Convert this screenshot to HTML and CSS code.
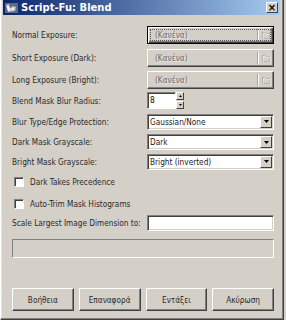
FILE: index.html
```html
<!DOCTYPE html>
<html>
<head>
<meta charset="utf-8">
<link rel="stylesheet" href="styles.css">
</head>
<body>
<div class="window">
  <div class="titlebar">
    <svg class="appicon" width="13" height="11" viewBox="0 0 13 11">
      <rect x="0" y="1" width="13" height="10" fill="#5a6a8a"/>
      <path d="M1 3 L4 2 L5 6 L8 4 L11 5 L10 9 L3 10 Z" fill="#c8c8c8"/>
      <path d="M2 4 L4 4 L5 8 L3 9 Z" fill="#ffffff"/>
      <path d="M6 6 L9 6 L9 8 L6 8 Z" fill="#e8e8e8"/>
    </svg>
    <span class="title">Script-Fu: Blend</span>
    <span class="close">×</span>
  </div>
  <div class="content">
    <div class="form">
      <div class="lbl r1">Normal Exposure:</div>
      <div class="cell r1"><div class="filebtn focused"><span class="ftext">(Κανένα)</span><span class="fsep"></span><span class="ficon"><svg width="9" height="8" viewBox="0 0 9 8"><path d="M0.5 1.5 H3 L4 2.5 H7.5 V7.5 H0.5 Z" fill="none" stroke="#a8a49c"/><path d="M0.5 1.5 H3 L4 2.5 H7.5 V7.5 H0.5 Z" fill="none" stroke="#fff" stroke-width="0.6" transform="translate(0.7 0.7)"/></svg></span></div></div>

      <div class="lbl r2">Short Exposure (Dark):</div>
      <div class="cell r2"><div class="filebtn"><span class="ftext">(Κανένα)</span><span class="fsep"></span><span class="ficon"><svg width="9" height="8" viewBox="0 0 9 8"><path d="M0.5 1.5 H3 L4 2.5 H7.5 V7.5 H0.5 Z" fill="none" stroke="#a8a49c"/><path d="M0.5 1.5 H3 L4 2.5 H7.5 V7.5 H0.5 Z" fill="none" stroke="#fff" stroke-width="0.6" transform="translate(0.7 0.7)"/></svg></span></div></div>

      <div class="lbl r3">Long Exposure (Bright):</div>
      <div class="cell r3"><div class="filebtn"><span class="ftext">(Κανένα)</span><span class="fsep"></span><span class="ficon"><svg width="9" height="8" viewBox="0 0 9 8"><path d="M0.5 1.5 H3 L4 2.5 H7.5 V7.5 H0.5 Z" fill="none" stroke="#a8a49c"/><path d="M0.5 1.5 H3 L4 2.5 H7.5 V7.5 H0.5 Z" fill="none" stroke="#fff" stroke-width="0.6" transform="translate(0.7 0.7)"/></svg></span></div></div>

      <div class="lbl r4">Blend Mask Blur Radius:</div>
      <div class="cell r4"><div class="spin"><span class="spinentry">8</span><span class="spinbtns"><span class="sbtn"><svg width="5" height="3" viewBox="0 0 5 3"><path d="M2.5 0 L5 3 H0 Z" fill="#000"/></svg></span><span class="sbtn"><svg width="5" height="3" viewBox="0 0 5 3"><path d="M0 0 H5 L2.5 3 Z" fill="#000"/></svg></span></span></div></div>

      <div class="lbl r5">Blur Type/Edge Protection:</div>
      <div class="cell r5"><div class="combo"><span class="ctext">Gaussian/None</span><span class="carrow"><svg width="5" height="3" viewBox="0 0 5 3"><path d="M0 0 H5 L2.5 3 Z" fill="#000"/></svg></span></div></div>

      <div class="lbl r6">Dark Mask Grayscale:</div>
      <div class="cell r6"><div class="combo"><span class="ctext">Dark</span><span class="carrow"><svg width="5" height="3" viewBox="0 0 5 3"><path d="M0 0 H5 L2.5 3 Z" fill="#000"/></svg></span></div></div>

      <div class="lbl r7">Bright Mask Grayscale:</div>
      <div class="cell r7"><div class="combo"><span class="ctext">Bright (inverted)</span><span class="carrow"><svg width="5" height="3" viewBox="0 0 5 3"><path d="M0 0 H5 L2.5 3 Z" fill="#000"/></svg></span></div></div>

      <div class="chkrow r8"><span class="chk"></span><span>Dark Takes Precedence</span></div>
      <div class="chkrow r9"><span class="chk"></span><span>Auto-Trim Mask Histograms</span></div>

      <div class="lbl r10">Scale Largest Image Dimension to:</div>
      <div class="cell r10"><div class="entry"></div></div>
    </div>
    <div class="progress"></div>
    <div class="buttons">
      <div class="btn">Βοήθεια</div>
      <div class="btn">Επαναφορά</div>
      <div class="btn">Εντάξει</div>
      <div class="btn">Ακύρωση</div>
    </div>
  </div>
</div>
</body>
</html>
```
FILE: styles.css
```css
* { box-sizing: border-box; }
html, body {
  margin: 0;
  padding: 0;
  background: #d4d0c8;
}
body {
  font-family: "DejaVu Sans Condensed", "DejaVu Sans", sans-serif;
  font-size: 8.2px;
  color: #2a2a2a;
  white-space: nowrap;
}
.window {
  height: 320px;
  width: 284px;
  margin-right: 2px;
  background: #d4d0c8;
  border-left: 1px solid #ffffff;
  border-right: 1px solid #404040;
  border-bottom: 1px solid #404040;
  box-shadow: inset -1px -1px 0 #808080, inset 1px 0 0 #e8e6e0;
  padding: 0 3px 3px 2px;
  display: flex;
  flex-direction: column;
}
.titlebar {
  height: 15px;
  background: linear-gradient(to right, #0a246a, #a6caf0);
  display: flex;
  align-items: center;
  padding-left: 2px;
  padding-right: 2px;
}
.appicon { flex: none; }
.title {
  color: #fff;
  font-family: "DejaVu Sans", sans-serif;
  font-weight: bold;
  font-size: 10px;
  margin-left: 3px;
  flex: 1;
}
.close {
  width: 12px;
  height: 11px;
  background: #d4d0c8;
  border-top: 1px solid #fff;
  border-left: 1px solid #fff;
  border-right: 1px solid #404040;
  border-bottom: 1px solid #404040;
  color: #000;
  font-family: "DejaVu Sans", sans-serif;
  font-size: 10px;
  font-weight: bold;
  line-height: 9px;
  text-align: center;
}
.content {
  flex: 1;
  display: flex;
  flex-direction: column;
  padding: 8px 6px 0 9px;
}
.form {
  display: grid;
  grid-template-columns: 135px 127px;
  grid-template-rows: 23px 23px 21px 21px 21px 20px 19px 22px 21px 17px;
}
.lbl, .cell, .chkrow {
  display: flex;
  align-items: center;
}
.chkrow { grid-column: 1 / 3; padding-left: 2px; }
.chk {
  width: 10px;
  height: 10px;
  background: #fff;
  border-top: 1px solid #808080;
  border-left: 1px solid #808080;
  border-right: 1px solid #fff;
  border-bottom: 1px solid #fff;
  box-shadow: inset 1px 1px 0 #404040;
  margin-right: 6px;
}
.filebtn {
  width: 127px;
  height: 18px;
  background: #d4d0c8;
  border-top: 1px solid #fff;
  border-left: 1px solid #fff;
  border-right: 1px solid #404040;
  border-bottom: 1px solid #404040;
  box-shadow: inset -1px -1px 0 #808080;
  display: flex;
  align-items: center;
  color: #6c6870;
  text-shadow: 1px 1px 0 #ecEAE4;
}
.filebtn.focused {
  border: 1px solid #000;
  box-shadow: inset 1px 1px 0 #fff, inset -1px -1px 0 #404040, inset -2px -2px 0 #808080;
  outline: 1px dotted #555;
  outline-offset: -4px;
}
.ftext { flex: 1; padding-left: 7px; }
.fsep {
  width: 2px;
  height: 12px;
  border-left: 1px solid #a8a49c;
  border-right: 1px solid #fff;
}
.ficon {
  width: 14px;
  display: flex;
  justify-content: center;
}
.spin { display: flex; height: 17px; }
.spinentry {
  width: 29px;
  height: 17px;
  background: #fff;
  border-top: 1px solid #808080;
  border-left: 1px solid #808080;
  border-right: 1px solid #fff;
  border-bottom: 1px solid #fff;
  box-shadow: inset 1px 1px 0 #404040;
  padding-left: 2px;
  line-height: 15px;
  color: #000;
}
.spinbtns { display: flex; flex-direction: column; }
.sbtn {
  width: 8px;
  height: 8px;
  background: #d4d0c8;
  border-top: 1px solid #fff;
  border-left: 1px solid #fff;
  border-right: 1px solid #404040;
  border-bottom: 1px solid #404040;
  display: flex;
  align-items: center;
  justify-content: center;
}
.sbtn + .sbtn { margin-top: 1px; }
.sbtn svg { width: 3px; height: 2px; }
.combo {
  width: 127px;
  height: 16px;
  background: #fff;
  border-top: 1px solid #808080;
  border-left: 1px solid #808080;
  border-right: 1px solid #fff;
  border-bottom: 1px solid #fff;
  box-shadow: inset 1px 1px 0 #404040, inset -1px -1px 0 #d4d0c8;
  display: flex;
  align-items: stretch;
  padding: 1px;
}
.ctext { flex: 1; padding-left: 1px; line-height: 12px; color: #1a1a2a; }
.carrow {
  width: 12px;
  background: #d4d0c8;
  border-top: 1px solid #fff;
  border-left: 1px solid #fff;
  border-right: 1px solid #404040;
  border-bottom: 1px solid #404040;
  display: flex;
  align-items: center;
  justify-content: center;
}
.entry {
  width: 127px;
  height: 16px;
  background: #fff;
  border-top: 1px solid #808080;
  border-left: 1px solid #808080;
  border-right: 1px solid #fff;
  border-bottom: 1px solid #fff;
  box-shadow: inset 1px 1px 0 #404040, inset -1px -1px 0 #d4d0c8;
}
.progress {
  margin-top: 8px;
  width: 262px;
  height: 19px;
  border-top: 1px solid #808080;
  border-left: 1px solid #808080;
  border-right: 1px solid #fff;
  border-bottom: 1px solid #fff;
}
.buttons {
  margin-top: 30px;
  display: flex;
  gap: 5px;
}
.btn {
  width: 62px;
  height: 23px;
  background: #d4d0c8;
  border-top: 1px solid #fff;
  border-left: 1px solid #fff;
  border-right: 1px solid #404040;
  border-bottom: 1px solid #404040;
  box-shadow: inset -1px -1px 0 #808080;
  display: flex;
  align-items: center;
  justify-content: center;
  color: #2a2a2a;
}
```
